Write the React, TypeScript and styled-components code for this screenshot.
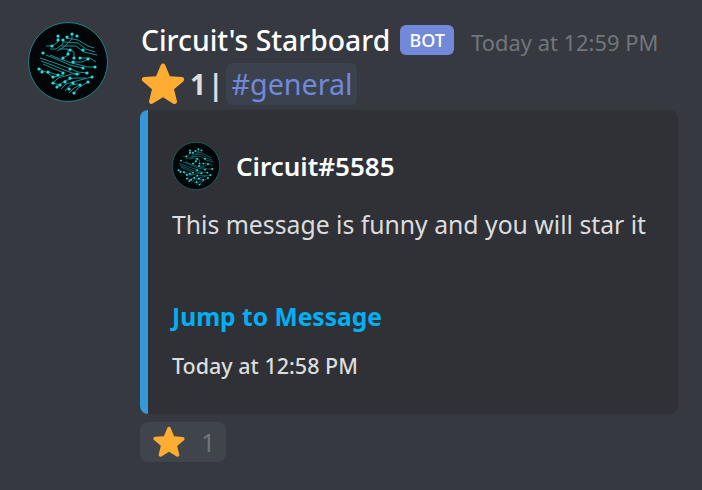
import React from 'react';
import styled, { createGlobalStyle } from 'styled-components';

const GlobalStyle = createGlobalStyle`
  html, body {
    margin: 0;
    padding: 0;
    background-color: #36393f;
    font-family: "Noto Sans", "Open Sans", sans-serif;
  }
`;

const Page = styled.div`
  width: 702px;
  height: 490px;
  box-sizing: border-box;
  padding: 22px 24px 0 28px;
  display: flex;
  gap: 33px;
  overflow: hidden;
  background-color: #36393f;
`;

const AvatarBox = styled.div<{ $size: number }>`
  width: ${(p) => p.$size}px;
  height: ${(p) => p.$size}px;
  flex: none;
`;

const Content = styled.div`
  width: 538px;
  flex: none;
  display: flex;
  flex-direction: column;
  margin-left: -1px;
`;

const Header = styled.div`
  height: 36px;
  display: flex;
  align-items: center;
  margin-left: 1px;
`;

const Username = styled.span`
  color: #ffffff;
  font-size: 28.3px;
  font-weight: 500;
  line-height: 36px;
  white-space: nowrap;
`;

const BotTag = styled.span`
  margin-left: 10px;
  width: 54px;
  height: 30px;
  border-radius: 6px;
  background-color: #7289da;
  color: #ffffff;
  font-size: 18px;
  font-weight: 500;
  display: flex;
  align-items: center;
  justify-content: center;
`;

const Timestamp = styled.span`
  margin-left: 17px;
  margin-top: 5px;
  color: #72767d;
  font-size: 21.9px;
  white-space: nowrap;
`;

const Headline = styled.div`
  height: 52px;
  display: flex;
  align-items: center;
`;

const CountText = styled.span`
  margin-left: 4px;
  color: #dcddde;
  font-size: 28px;
  font-weight: 700;
  letter-spacing: 2px;
`;

const ChannelMention = styled.span`
  margin-left: 1px;
  height: 42px;
  padding: 0 4px 0 5px;
  border-radius: 6px;
  background-color: rgba(114, 137, 218, 0.1);
  color: #7289da;
  font-size: 28.7px;
  line-height: 42px;
  white-space: nowrap;
`;

const Embed = styled.div`
  height: 304px;
  box-sizing: border-box;
  padding: 30px 24px 0 24px;
  background-color: #2f3136;
  border-left: 8px solid #3498db;
  border-radius: 8px;
  display: flex;
  flex-direction: column;
`;

const EmbedAuthor = styled.div`
  display: flex;
  align-items: center;
  gap: 16px;
  height: 50px;
  margin-top: 1px;
`;

const AuthorName = styled.span`
  color: #ffffff;
  font-size: 26px;
  font-weight: 600;
`;

const Description = styled.div`
  margin-top: 17px;
  color: #dcddde;
  font-size: 24.75px;
  line-height: 34px;
  white-space: nowrap;
`;

const JumpLink = styled.a`
  margin-top: 58px;
  color: #00b0f4;
  font-size: 24.6px;
  font-weight: 700;
  line-height: 34px;
  white-space: nowrap;
`;

const Footer = styled.div`
  margin-top: 16px;
  color: #dcddde;
  font-size: 21.5px;
  font-weight: 500;
  line-height: 32px;
  white-space: nowrap;
`;

const Reaction = styled.div`
  margin-top: 8px;
  width: 86px;
  height: 40px;
  border-radius: 8px;
  background-color: #40444b;
  display: flex;
  align-items: center;
  padding-left: 12px;
  box-sizing: border-box;
  gap: 15px;
`;

const ReactionCount = styled.span`
  color: #72767d;
  font-size: 25px;
`;

const starPath =
  'M18 2.2c.9 0 1.6.5 2 1.4l4 9.6 10.4.8c2 .2 2.7 2.5 1.2 3.8l-8 6.8 2.5 10.2c.4 1.9-1.6 3.3-3.2 2.3L18 31.5 9.1 37c-1.6 1-3.6-.4-3.2-2.3l2.5-10.2-8-6.8c-1.5-1.3-.8-3.6 1.2-3.8L12 13.2l4-9.6c.4-.9 1.1-1.4 2-1.4z';

const Star = ({ size }: { size: number }) => (
  <svg width={size} height={size} viewBox="0 0 36 40" aria-hidden="true">
    <path d={starPath} fill="#ffac33" />
  </svg>
);

// traces and pads read off the reference avatar, in its 80px space
const traces = [
  'M30 14 L30 20 L24 24 L18 24',
  'M35 18 L35 22 L28 27 L22 27',
  'M44 12 L44 17 L36 25 L29 29',
  'M38 16 L50 18 L60 24 L66 26',
  'M36 20 L50 21 L58 27 L67 30',
  'M33 24 L48 24 L56 30 L69 33',
  'M31 27 L40 27 L40 33 L35 36',
  'M42 28 L46 30 L46 36',
  'M52 36 L62 36 L68 40',
  'M45 40 L54 40 L60 37',
  'M12 36 L24 40 L38 45 L50 50 L60 51',
  'M13 39 L24 43 L36 48 L50 53',
  'M15 42 L24 46 L34 50',
  'M18 33 L28 37 L42 43 L55 46',
  'M22 33 L32 37 L44 41 L60 45 L67 45',
  'M11 47 L18 50 L25 55 L36 53',
  'M20 50 L30 53',
  'M25 61 L30 56 L44 52 L52 52',
  'M29 65 L36 59 L46 56 L58 56',
  'M33 67 L38 62 L52 58 L64 55',
  'M37 69 L42 63 L50 62',
  'M41 71 L46 66 L52 63',
  'M46 71 L50 66 L60 60',
  'M25 61 L32 63',
];

const dots: [number, number][] = [
  [15, 31], [30, 14], [30, 18], [35, 18], [44, 12], [39, 15], [49, 14], [24, 24],
  [42, 28], [40, 32], [35, 36], [46, 36], [55, 28], [52, 36], [45, 40], [60, 37],
  [42, 47], [55, 46], [59, 51], [64, 55], [67, 45], [11, 47], [14, 50], [20, 50],
  [25, 55], [30, 53], [35, 51], [42, 56], [37, 60], [45, 61], [52, 63], [25, 61],
  [32, 63], [29, 65], [41, 67], [46, 71], [60, 60], [49, 52],
];

const CircuitLogo = ({ size }: { size: number }) => (
  <AvatarBox $size={size}>
    <svg width={size} height={size} viewBox="0 0 80 80" aria-hidden="true">
      <circle cx="40" cy="40" r="39.5" fill="#020608" stroke="#1a8f8f" strokeWidth="0.9" />
      {traces.map((d) => (
        <path key={d} d={d} fill="none" stroke="#178f92" strokeWidth="1" />
      ))}
      {dots.map(([x, y]) => (
        <circle key={`${x}-${y}`} cx={x} cy={y} r="1.6" fill="#25dcdf" />
      ))}
    </svg>
  </AvatarBox>
);

export default function App() {
  return (
    <>
      <GlobalStyle />
      <Page>
        <CircuitLogo size={80} />
        <Content>
          <Header>
            <Username>Circuit's Starboard</Username>
            <BotTag>BOT</BotTag>
            <Timestamp>Today at 12:59 PM</Timestamp>
          </Header>
          <Headline>
            <Star size={46} />
            <CountText>1|</CountText>
            <ChannelMention>#general</ChannelMention>
          </Headline>
          <Embed>
            <EmbedAuthor>
              <CircuitLogo size={48} />
              <AuthorName>Circuit#5585</AuthorName>
            </EmbedAuthor>
            <Description>This message is funny and you will star it</Description>
            <JumpLink>Jump to Message</JumpLink>
            <Footer>Today at 12:58 PM</Footer>
          </Embed>
          <Reaction>
            <Star size={34} />
            <ReactionCount>1</ReactionCount>
          </Reaction>
        </Content>
      </Page>
    </>
  );
}
